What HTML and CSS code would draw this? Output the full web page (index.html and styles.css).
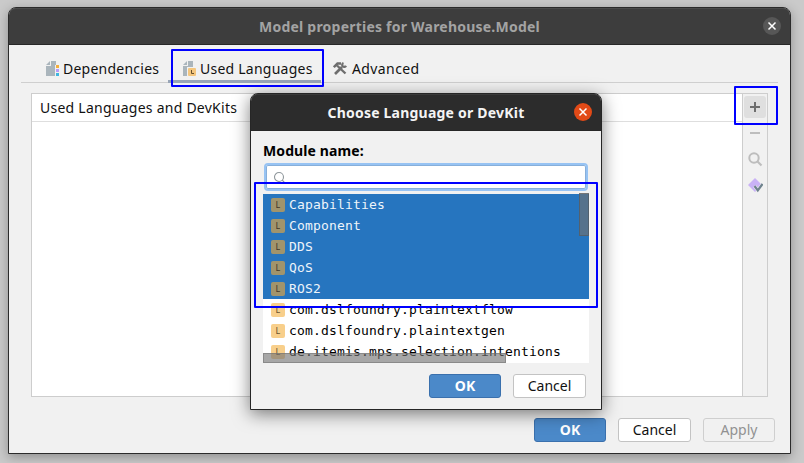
FILE: index.html
```html
<!DOCTYPE html>
<html lang="en">
<head>
<meta charset="utf-8">
<title>Model properties</title>
<link rel="stylesheet" href="styles.css">
</head>
<body>
<svg class="defs" width="0" height="0">
  <symbol id="close" viewBox="0 0 18 18"><path d="M5.500 5.500l7 7m0-7l-7 7" stroke="#fff" stroke-width="1.500" fill="none"/></symbol>
</svg>
<main class="window">
  <header class="titlebar">
    <h1>Model properties for Warehouse.Model</h1>
    <button class="close"><svg width="18" height="18"><use href="#close"/></svg></button>
  </header>
  <nav class="tabs">
    <div class="tab tab-deps">
      <svg width="14" height="16" viewBox="0 0 14 16"><path d="M5 0h5v4H9v11H0V5h5zM4 0v4H0z" fill="#aab5bc"/><path d="M10 4h3v3h-3z" fill="#f4af3d"/><path d="M10 8h3v3h-3z" fill="#b99bf8"/><path d="M10 12h3v3h-3z" fill="#40b6e0"/></svg>
      <span>Dependencies</span>
    </div>
    <div class="tab tab-langs active">
      <svg width="14" height="16" viewBox="0 0 14 16"><path d="M5 0h5v6H4v9H0V5h5zM4 0v4H0z" fill="#aab5bc"/><rect x="5" y="7" width="8" height="8" rx="1" fill="#f4c67e"/><path d="M8.500 9v3.500h2.500" fill="none" stroke="#67502d"/></svg>
      <span>Used Languages</span>
    </div>
    <div class="tab tab-adv">
      <svg width="14" height="16" viewBox="0 0 14 16"><g fill="none" stroke="#6e6e6e"><path d="M.8 6.200L4.500 2.500h3.500" stroke-width="2.600"/><path d="M4 4.500l8.500 8" stroke-width="2.400"/><path d="M2 13l7-7" stroke-width="2.600"/><path d="M10.500 2a2 2 0 1 0 2.500 2.700" stroke-width="2.200"/></g></svg>
      <span>Advanced</span>
    </div>
  </nav>
  <section class="panel">
    <div class="table"><div class="table-head"><span>Used Languages and DevKits</span></div></div>
    <div class="tools">
      <button class="tool hover"><svg width="16" height="16"><path d="M8 3v10M3 8h10" stroke="#6e6e6e" stroke-width="2"/></svg></button>
      <button class="tool"><svg width="16" height="16"><path d="M3 8h10" stroke="#bdbdbd" stroke-width="2"/></svg></button>
      <button class="tool"><svg width="16" height="16"><circle cx="7" cy="7" r="4.700" fill="none" stroke="#bdbdbd" stroke-width="2"/><path d="M10.500 10.500l4 4" stroke="#bdbdbd" stroke-width="2.200"/></svg></button>
      <button class="tool"><svg width="16" height="16"><path d="M8 1l7 7-7 7-7-7z" fill="#c9b2f6"/><path d="M7.500 9l3.300 4.500 4.700-6.500" fill="none" stroke="#f1f1f1" stroke-width="3.200"/><path d="M7.500 9l3.300 4.500 4.700-6.500" fill="none" stroke="#6e828d" stroke-width="2.200"/></svg></button>
    </div>
  </section>
  <footer class="actions">
    <button class="btn primary"><span>OK</span></button>
    <button class="btn"><span>Cancel</span></button>
    <button class="btn disabled"><span>Apply</span></button>
  </footer>
</main>

<section class="dialog">
  <header class="titlebar">
    <h2>Choose Language or DevKit</h2>
    <button class="close"><svg width="18" height="18"><use href="#close"/></svg></button>
  </header>
  <div class="dialog-body">
    <div class="label"><span>Module name:</span></div>
    <div class="search"><svg width="14" height="14"><circle cx="6" cy="6" r="4.500" fill="none" stroke="#8f979c" stroke-width="1.100"/><path d="M9.200 9.200l2 2" stroke="#8f979c" stroke-width="1.200"/></svg></div>
    <div class="list-wrap">
      <ul class="list">
        <li class="sel"><i>L</i><span>Capabilities</span></li>
        <li class="sel"><i>L</i><span>Component</span></li>
        <li class="sel"><i>L</i><span>DDS</span></li>
        <li class="sel"><i>L</i><span>QoS</span></li>
        <li class="sel"><i>L</i><span>ROS2</span></li>
        <li><i>L</i><span>com.dslfoundry.plaintextflow</span></li>
        <li><i>L</i><span>com.dslfoundry.plaintextgen</span></li>
        <li><i>L</i><span>de.itemis.mps.selection.intentions</span></li>
      </ul>
      <div class="bar-v"></div>
      <div class="bar-h"></div>
    </div>
    <div class="actions">
      <button class="btn primary"><span>OK</span></button>
      <button class="btn"><span>Cancel</span></button>
    </div>
  </div>
</section>

<div class="mark mark-tab"></div>
<div class="mark mark-add"></div>
<div class="mark mark-list"></div>
</body>
</html>
```
FILE: styles.css
```css
* { box-sizing: border-box; }
body {
  margin: 0;
  width: 804px;
  height: 463px;
  overflow: hidden;
  padding: 7px 0 0 8px;
  background: #cacaca;
  font: 14px/20px "Noto Sans", sans-serif;
  color: #111;
  position: relative;
}
.defs { position: absolute; }
h1, h2, ul { margin: 0; padding: 0; font: inherit; }
button { font: inherit; padding: 0; border: 0; background: none; color: inherit; }
svg { display: block; flex: none; }
span { white-space: nowrap; }

.window {
  width: 783px;
  height: 447px;
  border: 1px solid #2b2b2b;
  border-radius: 8px 8px 0 0;
  background: #f1f1f1;
  box-shadow: 0 3px 12px rgba(0, 0, 0, .3);
  display: flex;
  flex-direction: column;
}
.titlebar {
  height: 37px;
  flex: none;
  display: grid;
  grid-template-columns: 1fr auto 1fr;
  align-items: center;
  background: #3d3d3d;
  border-bottom: 1px solid #272727;
  border-radius: 7px 7px 0 0;
  box-shadow: inset 0 1px #4b4b4b;
  color: #a3a3a3;
  font-weight: 700;
  letter-spacing: .22px;
}
.titlebar h1, .titlebar h2 { grid-column: 2; white-space: nowrap; padding-top: 1px; }
.close {
  width: 18px;
  height: 18px;
  border-radius: 50%;
  background: #575757;
  justify-self: end;
  margin-right: 9px;
}

.tabs {
  display: flex;
  height: 38px;
  flex: none;
  margin: 0 12px;
  border-bottom: 1px solid #cfcfcf;
}
.tab {
  display: flex;
  align-items: center;
  gap: 3px;
  height: 38px;
  padding-top: 10px;
  letter-spacing: .24px;
}
.tab-deps { width: 147px; padding-left: 25px; }
.tab-langs { width: 153px; padding-left: 15px; }
.tab-adv { padding-left: 12px; gap: 5px; letter-spacing: .4px; }
.active { border-bottom: 3px solid #98a5b7; padding-top: 13px; }

.panel {
  display: flex;
  width: 737px;
  height: 304px;
  margin: 10px 0 0 22px;
  border: 1px solid #cdcdcd;
}
.table { flex: 1; background: #fff; }
.table-head {
  height: 28px;
  padding: 4px 0 0 8px;
  border-bottom: 1px solid #dedede;
  letter-spacing: .25px;
}
.tools {
  width: 25px;
  border-left: 1px solid #cdcdcd;
  display: flex;
  flex-direction: column;
  align-items: center;
  gap: 4px;
  padding-top: 2px;
}
.tool { width: 22px; height: 22px; border-radius: 3px; display: grid; place-items: center; }
.hover { background: #dfdfdf; }

.actions { display: flex; justify-content: flex-end; gap: 12px; }
.window > .actions { margin: 21px 15px 0 0; }
.btn {
  width: 73px;
  height: 24px;
  border: 1px solid #c3c3c3;
  border-radius: 3px;
  background: #fff;
  line-height: 20px;
}
.btn.primary { width: 72px; background: #4b89c9; border-color: #3a70ad; color: #fff; font-weight: 700; }
.btn.disabled { width: 72px; background: #f1f1f1; border-color: #cfcfcf; color: #919191; }

.dialog {
  position: absolute;
  left: 250px;
  top: 93px;
  width: 352px;
  height: 317px;
  border: 1px solid #262626;
  border-radius: 8px 8px 0 0;
  background: #f1f1f1;
  box-shadow: 0 4px 17px rgba(0, 0, 0, .5);
}
.dialog .titlebar { background: #2c2c2c; box-shadow: inset 0 1px #3b3b3b; color: #f4f4f4; }
.dialog .close { background: #e24a17; }
.dialog-body { padding: 10px 12px 0; }
.label { height: 20px; font-weight: 700; color: #000; letter-spacing: .1px; }
.search {
  margin: 2px 1px 0;
  height: 28px;
  border: 2px solid #97c3f3;
  border-radius: 4px;
  background: #fff;
  padding: 6px 0 0 7px;
  box-shadow: inset 0 0 0 1px #87afda;
}
.list-wrap { position: relative; height: 169px; margin-top: 3px; }
.list { height: 169px; overflow: hidden; background: #fff; list-style: none; }
.list li {
  height: 21px;
  display: flex;
  align-items: center;
  gap: 4px;
  padding-left: 8px;
  font: 13px/21px "DejaVu Sans Mono", monospace;
  letter-spacing: .174px;
  color: #000;
}
.list i {
  width: 14px;
  height: 14px;
  margin-top: 1px;
  border-radius: 2px;
  background: #f8cf8b;
  color: #6b5330;
  font: 9px/14px "Noto Sans", sans-serif;
  text-align: center;
}
.list .sel { background: #2675bf; color: #eef4fa; }
.list .sel i { background: #a1946c; color: #40372a; }
.bar-v {
  position: absolute;
  right: 0;
  top: -1px;
  width: 10px;
  height: 43px;
  background: rgba(112, 112, 112, .65);
  border: 1px solid rgba(80, 80, 80, .5);
}
.bar-h {
  position: absolute;
  left: 0;
  bottom: 0;
  width: 243px;
  height: 10px;
  background: rgba(115, 115, 115, .63);
  border: 1px solid rgba(110, 110, 110, .5);
}
.dialog .actions { margin: 11px 3px 0 0; }

.mark { position: absolute; border: 2px solid #00f; border-radius: 1px; }
.mark-tab { left: 171px; top: 49px; width: 153px; height: 38px; }
.mark-add { left: 734px; top: 86px; width: 44px; height: 39px; }
.mark-list { left: 254px; top: 182px; width: 344px; height: 126px; }
```
